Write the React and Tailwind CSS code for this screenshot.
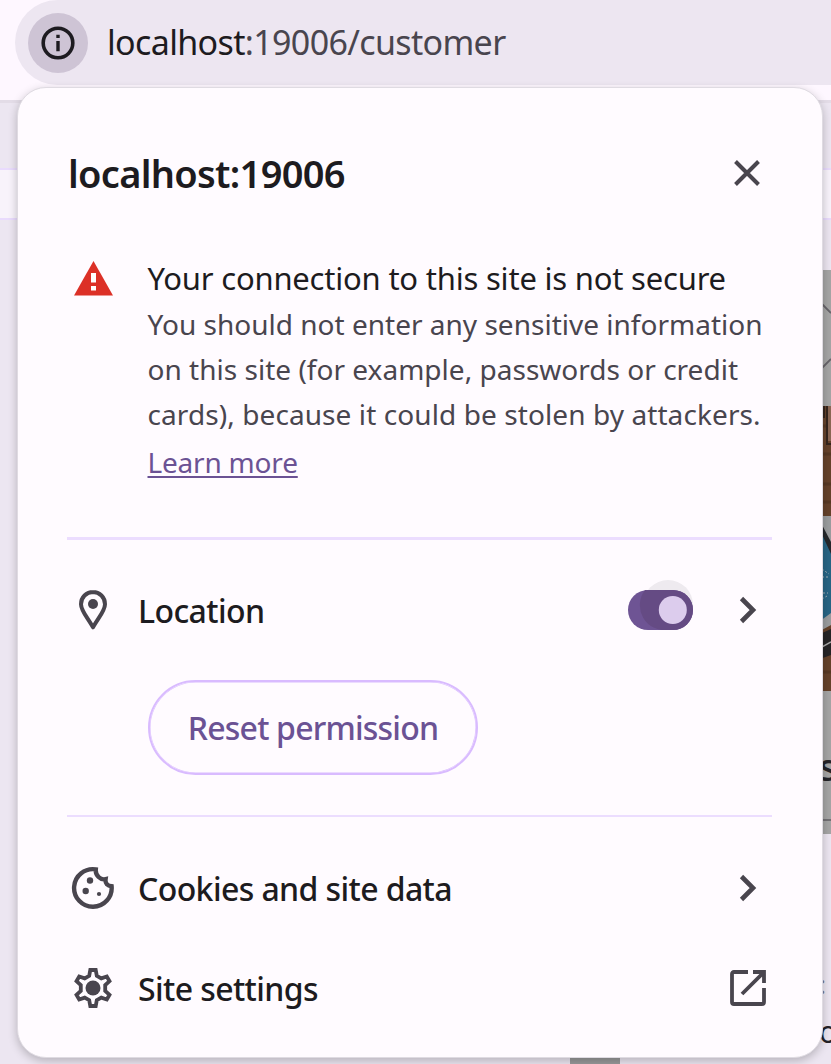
import React from "react";

const Row = ({ icon, label, labelClass, action, className }) => (
  <div className={"flex h-[100px] items-center pl-[49px] " + className}>
    <div className="flex w-[52px] justify-center">{icon}</div>
    <div className={"ml-[19px] flex-1 whitespace-nowrap text-[32px] font-medium text-[#1d1b20] " + labelClass}>{label}</div>
    {action}
  </div>
);

const Chevron = () => (
  <svg width="20" height="28" viewBox="0 0 20 28" fill="none" stroke="#49454e" strokeWidth="4.6">
    <path d="M3.5 2.5 15 14 3.5 25.5" />
  </svg>
);

const Pin = () => (
  <svg width="30" height="42" viewBox="0 0 30 42" fill="none">
    <path d="M15 3C8.4 3 3 8.3 3 15.2C3 21.5 8.7 27.5 15 38.3C21.3 27.5 27 21.5 27 15.2C27 8.3 21.6 3 15 3Z" stroke="#49454e" strokeWidth="4" strokeLinejoin="round" />
    <circle cx="15" cy="15" r="5" fill="#49454e" />
  </svg>
);

const Cookie = () => (
  <svg width="44" height="44" viewBox="0 0 44 44" fill="none">
    <path d="M24.8 3.4A18.8 18.8 0 1 0 40.6 20.2C36.6 19.8 34 17.5 34.6 13.2C29.5 14.4 24.2 9.5 24.8 3.4Z" stroke="#49454e" strokeWidth="4.4" />
    <g fill="#49454e"><circle cx="19" cy="14.5" r="3.2" /><circle cx="14.7" cy="25" r="3.2" /><circle cx="28" cy="28" r="2.1" /></g>
  </svg>
);

const Gear = () => (
  <svg width="42" height="42" viewBox="0 0 42 42" fill="none">
    <path d="M18.3 3H23.7L24.8 8.8L29.3 11.4L34.8 9.5L37.5 14.2L33.2 18.2V23.8L37.5 27.8L34.8 32.5L29.3 30.6L24.8 33.2L23.7 39H18.3L17.2 33.2L12.7 30.6L7.2 32.5L4.5 27.8L8.8 23.8V18.2L4.5 14.2L7.2 9.5L12.7 11.4L17.2 8.8Z" stroke="#49454e" strokeWidth="3.8" />
    <circle cx="21" cy="21" r="7.5" fill="#49454e" />
  </svg>
);

const External = () => (
  <svg width="36" height="36" viewBox="0 0 36 36" fill="none" stroke="#49454e" strokeWidth="3.8">
    <path d="M18 2H4Q2 2 2 4V32Q2 34 4 34H32Q34 34 34 32V18" />
    <path d="M23 2H34V13M33 3 12 24" />
  </svg>
);

const Photo = () => (
  <svg className="block" width="11" height="285" viewBox="0 0 11 285">
    <rect width="11" height="285" fill="#65422b" />
    <path d="M0 20H11M0 48H11M0 78H11M0 96H11M0 266H11" stroke="#573824" strokeWidth="3" />
    <rect x="7" width="4" height="35" fill="#8a6653" />
    <path d="M4 0V12M7 0V38H11" stroke="#35251d" strokeWidth="2" fill="none" />
    <path d="M0 110H11V219L0 225Z" fill="#9b9d9f" />
    <path d="M0 119 11 141V207L0 215Z" fill="#286585" />
    <path d="M0 115 11 136V148L0 124Z" fill="#25272b" />
    <path d="M2 163 9 168M2 171H8M3 187H8M2 193 7 190" stroke="#a0aeb5" strokeDasharray="2 2" />
    <path d="M0 228 11 223V249L0 253Z" fill="#252426" />
    <path d="M0 242 11 236" stroke="#aaa" strokeWidth="1.5" />
  </svg>
);

const Divider = ({ className }) => <div className={"mr-[50px] ml-[49px] bg-[#ecddff] " + className} />;

export default function App() {
  return (
    <div className="relative flex h-[1064px] w-[831px] flex-col overflow-hidden bg-[#ece6f1] font-['Noto_Sans','Open_Sans',sans-serif]">
      <div className="h-[100px] shrink-0 bg-[#fef7ff] pl-[15px]">
        <div className="flex h-[85px] items-center rounded-l-full bg-[#ede6f1] pl-[13px]">
          <div className="flex size-[60px] items-center justify-center rounded-full bg-[#cec4d5]">
            <svg width="34" height="34" viewBox="0 0 34 34" fill="none">
              <circle cx="17" cy="17" r="14.8" stroke="#1d1b20" strokeWidth="3.6" />
              <path d="M17 15V25.2M17 8.7V12" stroke="#1d1b20" strokeWidth="3.4" />
            </svg>
          </div>
          <div className="ml-[19px] whitespace-nowrap text-[34px] tracking-[-0.65px] text-[#49454e]"><span className="text-[#1d1b20]">localhost</span>:19006/customer</div>
        </div>
      </div>
      <div className="h-[3px] shrink-0 bg-[#e3dce7]" />
      <div className="h-[65px] shrink-0" />
      <div className="h-[52px] shrink-0 border-y-2 border-[#e9dbfd] bg-[#f8f3fb]" />
      <div className="h-[50px] shrink-0" />
      <div className="flex h-[564px] shrink-0 flex-col self-end bg-[#a5a5a5]">
        <svg className="block" width="11" height="136" viewBox="0 0 11 136" fill="none" stroke="#67646a" strokeWidth="1.8"><path d="M2 34 11 43M2 98 11 89" /></svg>
        <Photo />
        <div className="h-[141px] w-[11px] pt-[50px] text-[#242328]">
          <div className="-ml-px h-[80px] border-b-2 border-[#737175] text-[38px] font-medium leading-[50px]">s</div>
        </div>
      </div>
      <div className="h-[222px] w-[11px] shrink-0 self-end pt-[130px] text-[#242328]">
        <div className="-ml-px text-[26px] leading-10 text-[#77747a]">:</div>
        <div className="-ml-px pt-2 text-[30px] leading-10">o</div>
      </div>
      <div className="ml-[570px] h-2 w-[50px] shrink-0 bg-[#99999a]" />

      <div className="absolute top-[87px] left-[17px] flex h-[971px] w-[806px] flex-col rounded-[29px] border border-[#dfdbe2] bg-[#fffbff] shadow-[0_3px_10px_rgba(0,0,0,0.23)]">
        <div className="flex h-[170px] shrink-0 items-center justify-between pr-[62px] pl-[50px]">
          <h1 className="whitespace-nowrap text-[38px] font-semibold tracking-[-0.7px] text-[#1d1b20]">localhost:19006</h1>
          <svg className="-mt-px" width="26" height="26" viewBox="0 0 26 26" stroke="#49454e" strokeWidth="4"><path d="M1.5 1.5 24.5 24.5M24.5 1.5 1.5 24.5" /></svg>
        </div>
        <div className="mt-0.5 flex h-[277px] shrink-0 pl-14">
          <svg className="mt-px block shrink-0" width="39" height="35" viewBox="0 0 39 35"><path d="M19.5 0 39 34.5H0Z" fill="#dc3027" /><path d="M17 12H22V21.5H17ZM17 25H22V29.5H17Z" fill="#fff" /></svg>
          <div className="-mt-1 ml-[34.5px] whitespace-nowrap">
            <div className="text-[31px] leading-[45px] tracking-[-0.21px] text-[#1d1b20]">Your connection to this site is not secure</div>
            <p className="mt-px text-[28px] leading-[45px] text-[#49454e]">
              <span className="block tracking-[0.01px]">You should not enter any sensitive information</span>
              <span className="block tracking-[0.02px]">on this site (for example, passwords or credit</span>
              <span className="block tracking-[0.09px]">cards), because it could be stolen by attackers.</span>
            </p>
            <a className="mt-[3px] inline-block text-[28px] leading-[45px] tracking-[-0.2px] text-[#6b5294] underline decoration-2 underline-offset-[3px]">Learn more</a>
          </div>
        </div>
        <Divider className="h-[3px] shrink-0" />
        <Row className="mt-5 shrink-0 pr-16" icon={<Pin />} label="Location" labelClass="tracking-[-0.6px] pt-0.5" action={
          <div className="flex items-center">
            <svg className="mr-[45px] -mt-[10px]" width="65" height="50" viewBox="0 0 65 50">
              <circle cx="40" cy="25" r="25" fill="#eeeaef" />
              <rect y="10" width="65" height="40" rx="20" fill="#6e5494" />
              <path d="M17 10H45A20 20 0 0 1 45 50H40A25 25 0 0 1 17 10Z" fill="#654b84" />
              <circle cx="44.8" cy="30" r="14" fill="#dccced" />
            </svg>
            <Chevron />
          </div>
        } />
        <div className="mt-5 ml-[130px] flex h-[95px] w-[330px] shrink-0 items-center justify-center rounded-full border-2 border-[#d9bbff] pt-px text-[32px] font-medium tracking-[-0.8px] whitespace-nowrap text-[#6b5294] inset-ring-[0.5px] inset-ring-[#d9bbff]">Reset permission</div>
        <Divider className="mt-10 h-0.5 shrink-0" />
        <Row className="mt-[21px] shrink-0 pr-16" icon={<Cookie />} label="Cookies and site data" labelClass="tracking-[-0.6px] pt-px" action={<Chevron />} />
        <Row className="shrink-0 pr-14" icon={<Gear />} label="Site settings" labelClass="tracking-[-0.6px] pt-px" action={<External />} />
      </div>
    </div>
  );
}
